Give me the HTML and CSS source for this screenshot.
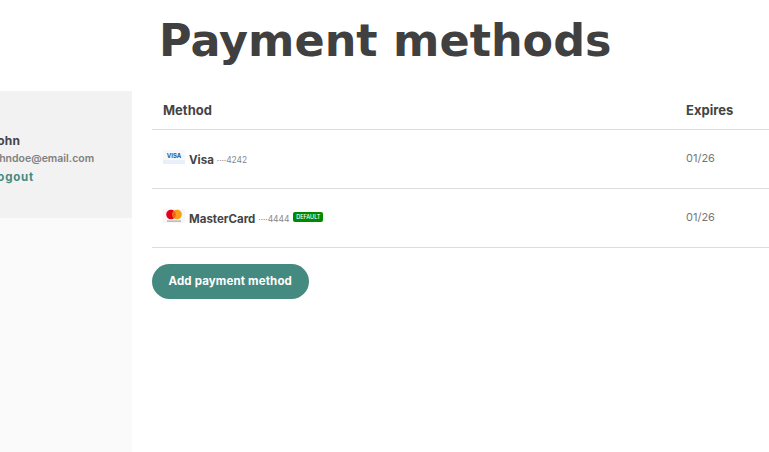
FILE: index.html
```html
<!DOCTYPE html>
<html lang="en">
<head>
  <meta charset="utf-8">
  <title>Payment methods</title>
  <link rel="stylesheet" href="styles.css">
</head>
<body>
  <h1 class="page-title">Payment methods</h1>

  <div class="layout">
    <!-- Sidebar, runs off the left edge -->
    <aside class="sidebar">
      <div class="account">
        <p class="account-name">John</p>
        <p class="account-email">johndoe@email.com</p>
        <a class="account-logout" href="#">Logout</a>
      </div>
    </aside>

    <main class="content">
      <table class="methods">
        <thead>
          <tr>
            <th>Method</th>
            <th class="col-expires">Expires</th>
          </tr>
        </thead>
        <tbody>
          <tr>
            <td>
              <div class="method">
                <svg class="card-icon" width="22" height="14" viewBox="0 0 22 14">
                  <rect width="22" height="14" fill="#f6f8fb"/>
                  <rect y="10" width="22" height="4" fill="#e9eff7"/>
                  <text x="11" y="7.5" text-anchor="middle" class="visa-text">VISA</text>
                </svg>
                <strong class="method-name">Visa</strong>
                <span class="method-digits">····4242</span>
              </div>
            </td>
            <td class="col-expires">01/26</td>
          </tr>
          <tr>
            <td>
              <div class="method">
                <svg class="card-icon" width="22" height="14" viewBox="0 0 22 14">
                  <rect width="22" height="14" fill="#f6f6f6"/>
                  <circle cx="8" cy="5.5" r="4.8" fill="#e2001a"/>
                  <circle cx="14" cy="5.5" r="4.8" fill="#f79e1b"/>
                  <path d="M11 1.7a4.8 4.8 0 0 1 0 7.6a4.8 4.8 0 0 1 0-7.6z" fill="#f2620f"/>
                  <rect x="4" y="11.5" width="14" height="1.2" fill="#a8a8a8"/>
                </svg>
                <strong class="method-name">MasterCard</strong>
                <span class="method-digits">····4444</span>
                <span class="badge">DEFAULT</span>
              </div>
            </td>
            <td class="col-expires">01/26</td>
          </tr>
        </tbody>
      </table>

      <a class="btn" href="#">Add payment method</a>
    </main>
  </div>
</body>
</html>
```

FILE: styles.css
```css
/* Reset */
* { box-sizing: border-box; margin: 0; padding: 0; }
:root {
  --fg-text: #444;
  --fg-muted: #777;
  --primary: #458a80;
  --line: #ddd;
}
html, body {
  overflow: hidden;
  height: 100%;
}
body {
  font-family: 'Inter', 'Liberation Sans', sans-serif;
  background: #fff;
  color: var(--fg-text);
}

.page-title {
  font-family: 'DejaVu Sans', sans-serif;
  font-size: 44.5px;
  line-height: 58px;
  font-weight: 700;
  color: #404040;
  margin: 12px 0 21px 159px;
  white-space: nowrap;
}

.layout {
  display: flex;
  height: calc(100vh - 91px);
  margin-left: -68px;
}

/* Sidebar */
.sidebar {
  width: 200px;
  flex: none;
  background: #fafafa;
}
.account {
  background: #f2f2f2;
  height: 127px;
  padding: 42px 0 0 58px;
}
.account-name {
  font-size: 12px;
  line-height: 16px;
  font-weight: 700;
  letter-spacing: 0.2px;
  margin-bottom: 2px;
}
.account-email {
  font-size: 10.5px;
  line-height: 16px;
  font-weight: 600;
  color: #808080;
  margin-bottom: 2px;
}
.account-logout {
  display: block;
  font-size: 11.5px;
  line-height: 16px;
  font-weight: 700;
  letter-spacing: 0.8px;
  color: var(--primary);
  text-decoration: none;
}

/* Tabla */
.content {
  flex: none;
  width: 700px;
  margin-left: 20px;
}
.methods {
  width: 100%;
  border-collapse: collapse;
  margin-bottom: 16px;
}
.methods th {
  text-align: left;
  font-size: 13px;
  font-weight: 700;
  height: 38px;
  padding: 0 11px;
  border-bottom: 1px solid var(--line);
}
.methods td {
  height: 59px;
  padding: 0 11px 1px;
  font-size: 11px;
  color: var(--fg-muted);
  border-bottom: 1px solid var(--line);
}
.methods .col-expires {
  width: 166px;
  padding: 0 0 1px;
}
.methods th.col-expires {
  padding: 0;
}
.method {
  display: flex;
  align-items: center;
  gap: 4px;
}
.card-icon {
  flex: none;
  margin-top: -3px;
}
.visa-text {
  font-size: 6px;
  font-weight: 700;
  fill: #27588f;
}
.method-name {
  font-size: 11.5px;
  font-weight: 700;
  color: var(--fg-text);
  margin-top: 3px;
}
.method-digits {
  font-size: 8.5px;
  margin-left: -1px;
  margin-top: 4px;
  color: #888;
  letter-spacing: -0.1px;
}
.badge {
  background: #008a00;
  color: #fff;
  font-size: 5.5px;
  font-weight: 500;
  line-height: 10px;
  padding: 0 3px;
  border-radius: 2px;
}

/* Boton */
.btn {
  display: inline-block;
  background: var(--primary);
  color: #fff;
  text-decoration: none;
  font-size: 11.5px;
  font-weight: 700;
  line-height: 35px;
  letter-spacing: 0.15px;
  padding: 0 16.5px;
  border-radius: 18px;
}
```
